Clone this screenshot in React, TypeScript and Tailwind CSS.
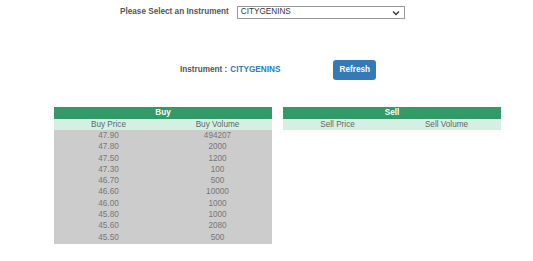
const buys = [
  ["47.90", "494207"],
  ["47.80", "2000"],
  ["47.50", "1200"],
  ["47.30", "100"],
  ["46.70", "500"],
  ["46.60", "10000"],
  ["46.00", "1000"],
  ["45.80", "1000"],
  ["45.60", "2080"],
  ["45.50", "500"],
];

function BookTable({ title, cols, rows }: { title: string; cols: string[]; rows: string[][] }) {
  return (
    <div className="w-[218px]">
      <div className="h-[12px] bg-[#339966] text-center text-[8.2px] font-bold leading-[12px] text-white">{title}</div>
      <div className="grid h-[11px] grid-cols-2 bg-[#d5efe2] text-center text-[8.2px] leading-[11px] text-[#666]">
        {cols.map((c) => (
          <div key={c}>{c}</div>
        ))}
      </div>
      {rows.length > 0 && (
        <div className="bg-[#cccccc] pb-[1px]">
          {rows.map((r, i) => (
            <div key={i} className="grid h-[11.3px] grid-cols-2 text-center text-[8.2px] leading-[11.3px] text-[#777]">
              <div>{r[0]}</div>
              <div>{r[1]}</div>
            </div>
          ))}
        </div>
      )}
    </div>
  );
}

export default function App() {
  return (
    <div className="h-[261px] w-[533px] bg-white font-['Liberation_Sans',Arial,sans-serif]">
      <div className="flex items-center pl-[120px] pt-[6px]">
        <span className="text-[8.2px] font-bold text-[#555]">Please Select an Instrument</span>
        <div className="ml-[8px] flex h-[13px] w-[168px] items-center justify-between border border-[#999] bg-white pl-[3px] pr-[4px] text-[8.2px] text-[#333]">
          <span>CITYGENINS</span>
          <svg width="8" height="6" viewBox="0 0 8 6">
            <path d="M1 1.5 L4 4.5 L7 1.5" fill="none" stroke="#333" strokeWidth="1.3" />
          </svg>
        </div>
      </div>
      <div className="mt-[41px] flex items-center pl-[180px]">
        <span className="text-[8.2px] font-bold text-[#555]">Instrument :</span>
        <span className="ml-[3px] text-[8.2px] font-bold text-[#2a7bc0]">CITYGENINS</span>
        <button className="ml-[53px] h-[20px] w-[43px] rounded-[3px] bg-[#337ab7] text-[8.2px] font-bold text-white">Refresh</button>
      </div>
      <div className="mt-[27px] flex gap-[11px] pl-[54px]">
        <BookTable title="Buy" cols={["Buy Price", "Buy Volume"]} rows={buys} />
        <BookTable title="Sell" cols={["Sell Price", "Sell Volume"]} rows={[]} />
      </div>
    </div>
  );
}
